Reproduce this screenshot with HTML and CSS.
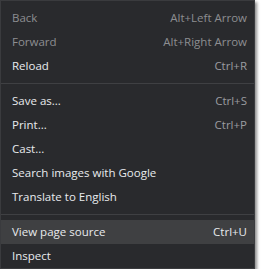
FILE: index.html
```html
<!DOCTYPE html>
<html>
<head>
<meta charset="utf-8">
<link rel="stylesheet" href="styles.css">
</head>
<body>
<div class="menu">
  <div class="item disabled"><span class="label">Back</span><span class="key">Alt+Left Arrow</span></div>
  <div class="item disabled"><span class="label">Forward</span><span class="key">Alt+Right Arrow</span></div>
  <div class="item"><span class="label">Reload</span><span class="key">Ctrl+R</span></div>
  <div class="sep"></div>
  <div class="item"><span class="label">Save as...</span><span class="key">Ctrl+S</span></div>
  <div class="item"><span class="label">Print...</span><span class="key">Ctrl+P</span></div>
  <div class="item"><span class="label">Cast...</span></div>
  <div class="item"><span class="label">Search images with Google</span></div>
  <div class="item"><span class="label">Translate to English</span></div>
  <div class="sep"></div>
  <div class="item active"><span class="label">View page source</span><span class="key">Ctrl+U</span></div>
  <div class="item"><span class="label">Inspect</span></div>
</div>
</body>
</html>
```

FILE: styles.css
```css
html, body {
  margin: 0;
  padding: 0;
  background: #ffffff;
}
.menu {
  width: 255px;
  box-sizing: border-box;
  background: #292a2d;
  border: 1px solid #3a3b3e;
  padding: 5px 0 0 0;
  box-shadow: 2px 2px 3px rgba(0, 0, 0, 0.45);
  font-family: "Open Sans", "Noto Sans", sans-serif;
  font-size: 11.5px;
  color: #e8eaed;
}
.item {
  height: 24px;
  display: flex;
  align-items: center;
  justify-content: space-between;
  padding: 0 7px 1px 11px;
  box-sizing: border-box;
}
.item.disabled .label { color: #8d8e91; }
.item.disabled .key { color: #8d8e91; }
.key { color: #9b9ca0; }
.item.active { background: #3f4042; }
.item.active .key { color: #e8eaed; }
.sep {
  height: 11px;
  display: flex;
  align-items: center;
}
.sep::before {
  content: "";
  display: block;
  width: 100%;
  height: 1px;
  background: #3f4043;
}
```
